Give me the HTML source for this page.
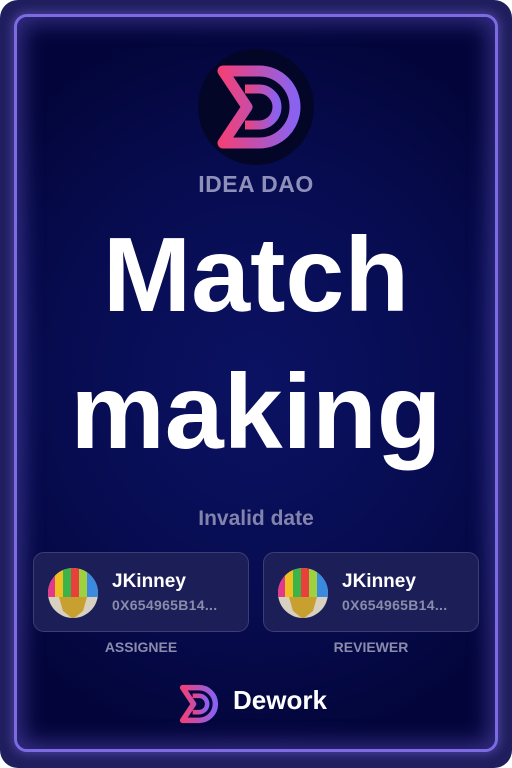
<!DOCTYPE html>
<html><head><meta charset="utf-8"><style>
*{margin:0;padding:0;box-sizing:border-box}
body{width:512px;height:768px;background:#fff;overflow:hidden;font-family:"Liberation Sans",sans-serif;font-weight:bold}
.outer{position:absolute;left:0;top:0;width:512px;height:768px;border-radius:18px;background:#201e5e}
.inner{position:absolute;left:14px;top:14px;width:484px;height:738px;border-radius:13px;border:3px solid #7c6be2;background:radial-gradient(ellipse 70% 50% at 50% 50%,#0b1262 0%,#070c50 60%,#03053a 100%);box-shadow:0 0 10px 2px rgba(124,107,226,.45),inset 0 0 22px 6px rgba(110,95,220,.45)}
.abs{position:absolute}
.c{left:0;width:512px;text-align:center}
.card{position:absolute;top:552px;width:216px;height:80px;border-radius:11px;background:#1c1e58;border:1px solid #3b3d74}
.name{position:absolute;left:78px;top:18px;font-size:19px;color:#fff}
.addr{position:absolute;left:78px;top:44px;font-size:14px;color:#8a8cab;letter-spacing:.3px}
.av{position:absolute;left:13px;top:14px}
.lbl{position:absolute;top:639px;width:216px;text-align:center;font-size:14px;color:#8a8cab}
</style></head><body>
<div class="outer"></div>
<div class="inner"></div>
<svg class="abs" style="left:197px;top:48px" width="118" height="118" viewBox="0 0 118 118">
<defs><linearGradient id="g" x1="0" x2="1"><stop offset="0" stop-color="#f0407a"/><stop offset="1" stop-color="#8a62f0"/></linearGradient></defs>
<circle cx="59" cy="59" r="58" fill="#030627"/>
<path d="M26 23 H62 A36 36 0 0 1 62 95 H26 L50 59 Z" fill="none" stroke="url(#g)" stroke-width="11" stroke-linejoin="round"/>
<path d="M48 41 H62 A18 18 0 0 1 62 77 H48" fill="none" stroke="url(#g)" stroke-width="9"/>
</svg>
<div class="abs c" style="top:171px;font-size:23px;color:#8e90ba;letter-spacing:.5px">IDEA DAO</div>
<div class="abs c" style="top:215px;font-size:106px;color:#fff;line-height:120px">Match</div>
<div class="abs c" style="top:352px;font-size:106px;color:#fff;line-height:120px">making</div>
<div class="abs c" style="top:507px;font-size:21px;color:#8384ad">Invalid date</div>

<div class="card" style="left:33px">
<svg class="av" width="52" height="52" viewBox="0 0 52 52"><defs><clipPath id="cp"><circle cx="26" cy="26" r="25"/></clipPath></defs><g clip-path="url(#cp)"><rect width="52" height="52" fill="#d8d0c0"/><rect x="0" y="0" width="8" height="30" fill="#e23a8a"/><rect x="8" y="0" width="8" height="30" fill="#f0c020"/><rect x="16" y="0" width="8" height="30" fill="#3cb44a"/><rect x="24" y="0" width="8" height="30" fill="#e8403a"/><rect x="32" y="0" width="8" height="30" fill="#9fd040"/><rect x="40" y="0" width="12" height="30" fill="#3a8ae0"/><path d="M12 30 H40 L36 44 L26 52 L16 44 Z" fill="#c8a030"/></g></svg>
<div class="name">JKinney</div><div class="addr">0X654965B14...</div></div>
<div class="lbl" style="left:33px">ASSIGNEE</div>
<div class="card" style="left:263px">
<svg class="av" width="52" height="52" viewBox="0 0 52 52"><defs><clipPath id="cp2"><circle cx="26" cy="26" r="25"/></clipPath></defs><g clip-path="url(#cp2)"><rect width="52" height="52" fill="#d8d0c0"/><rect x="0" y="0" width="8" height="30" fill="#e23a8a"/><rect x="8" y="0" width="8" height="30" fill="#f0c020"/><rect x="16" y="0" width="8" height="30" fill="#3cb44a"/><rect x="24" y="0" width="8" height="30" fill="#e8403a"/><rect x="32" y="0" width="8" height="30" fill="#9fd040"/><rect x="40" y="0" width="12" height="30" fill="#3a8ae0"/><path d="M12 30 H40 L36 44 L26 52 L16 44 Z" fill="#c8a030"/></g></svg>
<div class="name">JKinney</div><div class="addr">0X654965B14...</div></div>
<div class="lbl" style="left:263px">REVIEWER</div>

<svg class="abs" style="left:179px;top:684px" width="40" height="40" viewBox="18 15 88 88">
<path d="M26 23 H62 A36 36 0 0 1 62 95 H26 L50 59 Z" fill="none" stroke="url(#g)" stroke-width="12" stroke-linejoin="round"/>
<path d="M48 41 H62 A18 18 0 0 1 62 77 H48" fill="none" stroke="url(#g)" stroke-width="10"/>
</svg>
<div class="abs" style="left:233px;top:685px;font-size:26px;color:#fff">Dework</div>
</body></html>
